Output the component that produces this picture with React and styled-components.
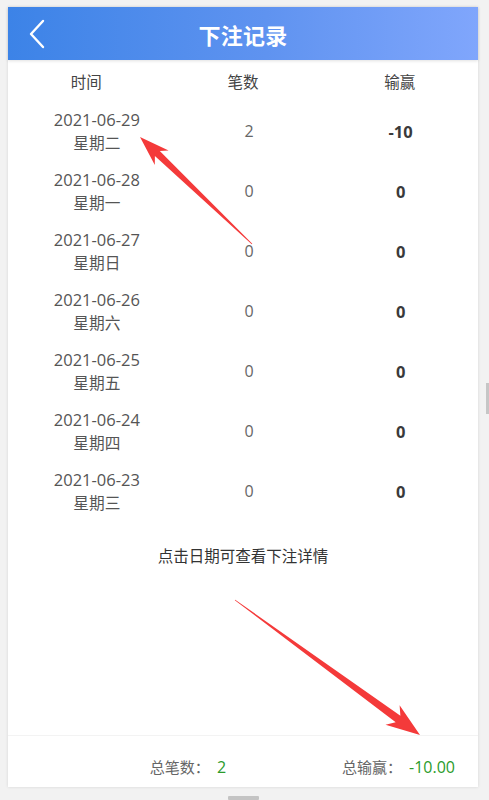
import React from "react";
import styled, { createGlobalStyle } from "styled-components";

const Global = createGlobalStyle`
  html, body { margin: 0; padding: 0; background: #f2f2f2; }
  body { font-family: "Open Sans", "Noto Sans CJK SC", sans-serif; overflow: hidden; }
  * { box-sizing: border-box; }
`;

const Page = styled.div`
  position: relative;
  width: 489px;
  height: 800px;
  padding: 7px 11px 0 8px;
  display: flex;
  flex-direction: column;
  align-items: flex-start;
`;

const Card = styled.div`
  width: 470px;
  height: 781px;
  background: #fff;
  box-shadow: 0 0 3px rgba(0, 0, 0, 0.12);
  display: flex;
  flex-direction: column;
`;

const Header = styled.div`
  height: 53px;
  flex: none;
  background: linear-gradient(90deg, #3c83e7 0%, #5f93f0 55%, #80a6fc 100%);
  display: flex;
  align-items: center;
  justify-content: center;
  position: relative;
  box-shadow: 0 1px 3px rgba(0, 0, 0, 0.12);
`;

const Back = styled.div`
  position: absolute;
  left: 20px;
  top: 12px;
  width: 18px;
  height: 30px;
  display: flex;
`;

const Title = styled.div`
  color: #fff;
  font-size: 22px;
  font-weight: 700;
  letter-spacing: 0.3px;
  font-family: "Noto Sans CJK SC", sans-serif;
`;

const Row = styled.div`
  display: grid;
  grid-template-columns: 1fr 1fr 1fr;
  height: ${(p) => (p.$head ? 41 : 60)}px;
  align-items: center;
  text-align: center;
`;

const HeadCell = styled.div`
  font-size: 15.5px;
  color: #444;
  font-family: "Noto Sans CJK SC", sans-serif;
`;

const DateCell = styled.div`
  display: flex;
  flex-direction: column;
  align-items: center;
  color: #555;
  font-size: 16.5px;
  line-height: 23px;
  padding-left: 21px;
  margin-top: -1px;
`;

const WeekDay = styled.span`
  font-family: "Noto Sans CJK SC", sans-serif;
  font-size: 15.7px;
`;

const Count = styled.div`
  color: #666;
  font-size: 16px;
  padding-left: 12px;
`;

const Win = styled.div`
  color: #3a3a3a;
  font-size: 16.5px;
  font-weight: 700;
  padding-left: 2px;
`;

const Hint = styled.div`
  height: 68px;
  display: flex;
  align-items: center;
  justify-content: center;
  color: #333;
  font-size: 15.5px;
  font-family: "Noto Sans CJK SC", sans-serif;
`;

const Spacer = styled.div`
  flex: 1;
`;

const Footer = styled.div`
  height: 52px;
  flex: none;
  border-top: 1px solid #f3f3f3;
  display: flex;
  justify-content: flex-end;
  align-items: flex-start;
  padding: 21px 23px 0 0;
  gap: 116px;
`;

const Stat = styled.div`
  display: flex;
  align-items: center;
  line-height: 20px;
`;

const StatLabel = styled.span`
  color: #666;
  font-size: 15px;
  font-family: "Noto Sans CJK SC", sans-serif;
  margin-right: 7px;
`;

const StatValue = styled.span`
  color: #2b9b2b;
  font-size: 16px;
`;

const Handle = styled.div`
  width: 31px;
  height: 4px;
  background: #c4c4c4;
  margin: 9px 0 0 220px;
  border-radius: 1px;
`;

const ScrollThumb = styled.div`
  position: absolute;
  right: 0;
  top: 383px;
  width: 3px;
  height: 31px;
  background: #c6c6c6;
`;

const Overlay = styled.svg`
  position: absolute;
  left: 0;
  top: 0;
  pointer-events: none;
`;

const rows = [
  ["2021-06-29", "星期二", "2", "-10"],
  ["2021-06-28", "星期一", "0", "0"],
  ["2021-06-27", "星期日", "0", "0"],
  ["2021-06-26", "星期六", "0", "0"],
  ["2021-06-25", "星期五", "0", "0"],
  ["2021-06-24", "星期四", "0", "0"],
  ["2021-06-23", "星期三", "0", "0"],
];

function arrowPoints(S, T, L, W, w, w0) {
  const dx = T[0] - S[0];
  const dy = T[1] - S[1];
  const len = Math.hypot(dx, dy);
  const u = [dx / len, dy / len];
  const n = [-u[1], u[0]];
  const B = [T[0] - u[0] * L, T[1] - u[1] * L];
  const B2 = [T[0] - u[0] * L * 0.8, T[1] - u[1] * L * 0.8];
  const p = (P, k) => [P[0] + n[0] * k, P[1] + n[1] * k];
  const pts = [
    p(S, w0),
    p(B2, w),
    p(B, W),
    T,
    p(B, -W),
    p(B2, -w),
    p(S, -w0),
  ];
  return pts.map((q) => q[0].toFixed(1) + "," + q[1].toFixed(1)).join(" ");
}

export default function App() {
  return (
    <>
      <Global />
      <Page>
        <Card>
          <Header>
            <Back>
              <svg width="18" height="30" viewBox="0 0 18 30">
                <path d="M15 2 L3 15 L15 28" fill="none" stroke="#fff" strokeWidth="2.4" strokeLinecap="round" strokeLinejoin="round" />
              </svg>
            </Back>
            <Title>下注记录</Title>
          </Header>
          <Row $head>
            <HeadCell>时间</HeadCell>
            <HeadCell>笔数</HeadCell>
            <HeadCell>输赢</HeadCell>
          </Row>
          {rows.map((r) => (
            <Row key={r[0]}>
              <DateCell>
                <span>{r[0]}</span>
                <WeekDay>{r[1]}</WeekDay>
              </DateCell>
              <Count>{r[2]}</Count>
              <Win>{r[3]}</Win>
            </Row>
          ))}
          <Hint>点击日期可查看下注详情</Hint>
          <Spacer />
          <Footer>
            <Stat>
              <StatLabel>总笔数：</StatLabel>
              <StatValue>2</StatValue>
            </Stat>
            <Stat>
              <StatLabel>总输赢：</StatLabel>
              <StatValue>-10.00</StatValue>
            </Stat>
          </Footer>
        </Card>
        <Handle />
        <ScrollThumb />
        <Overlay width="489" height="800" viewBox="0 0 489 800">
          <polygon points={arrowPoints([252, 244], [140, 137], 30, 10, 3.5, 0.4)} fill="#f43a3a" />
          <polygon points={arrowPoints([235, 600], [420, 735], 34, 12, 4, 0.4)} fill="#f43a3a" />
        </Overlay>
      </Page>
    </>
  );
}
